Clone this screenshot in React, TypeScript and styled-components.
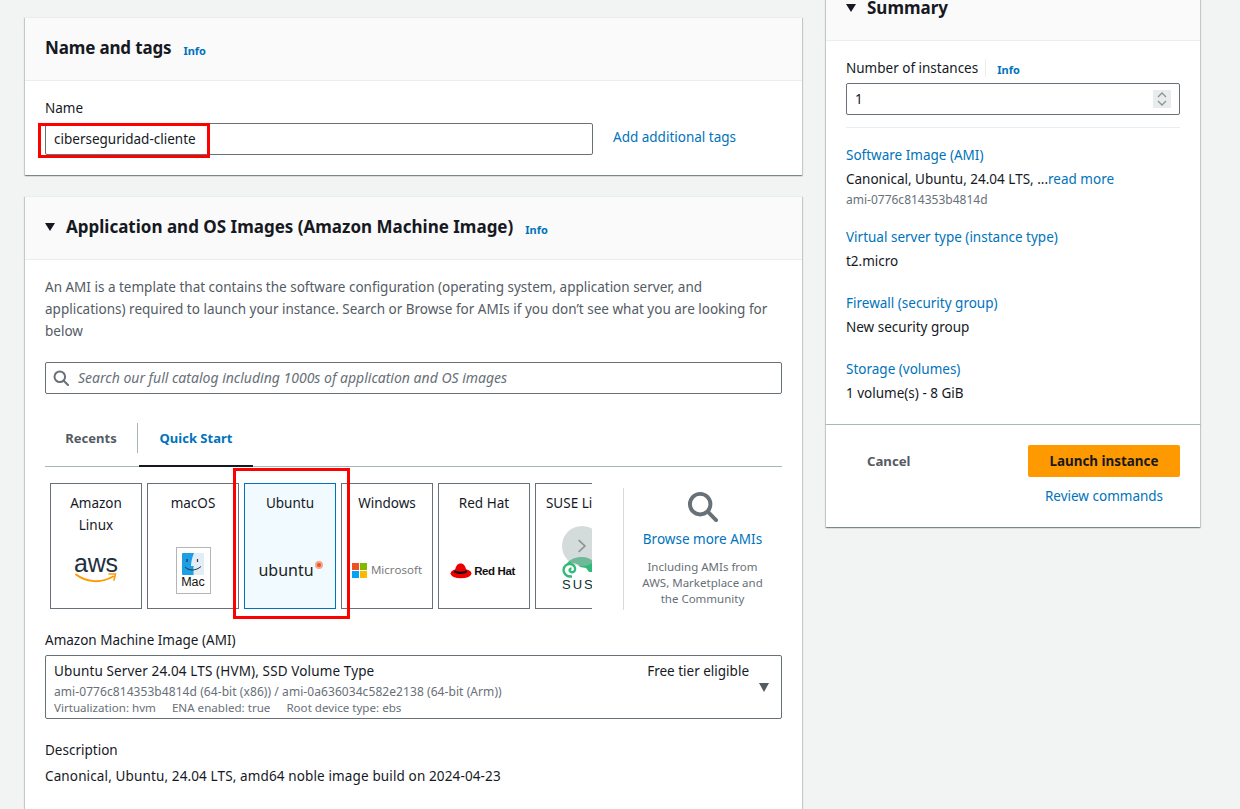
import React from "react";
import styled, { createGlobalStyle } from "styled-components";

const Global = createGlobalStyle`
  html, body { margin: 0; padding: 0; height: 809px; overflow: hidden; background: #f2f3f3; }
  body { font-family: "Noto Sans", "Open Sans", sans-serif; font-size: 14px; line-height: 22px; color: #16191f; }
  * { box-sizing: border-box; }
`;

const Page = styled.div`
  display: grid;
  grid-template-columns: 777px 374px;
  column-gap: 24px;
  padding: 17px 0 0 25px;
  align-items: start;
  position: relative;
`;
const Column = styled.div`display: flex; flex-direction: column; gap: 21px;`;
const Side = styled.div`display: flex; flex-direction: column; margin-top: -40px;`;
const Card = styled.section<{ $h?: number }>`
  background: #fff;
  height: ${p => (p.$h ? p.$h + "px" : "auto")};
  box-shadow: 0 1px 1px 0 rgba(0,28,36,.3), 1px 1px 1px 0 rgba(0,28,36,.15), -1px 1px 1px 0 rgba(0,28,36,.15);
  border-top: 1px solid #eaeded;
`;
const Header = styled.header`
  height: 63px;
  background: #fafafa;
  border-bottom: 1px solid #eaeded;
  display: flex;
  align-items: center;
  padding: 0 20px;
  gap: 12px;
`;
const Title = styled.h2<{ $tight?: boolean }>`
  margin: 0 0 2px;
  font-size: 17px;
  line-height: 22px;
  font-weight: 700;
  white-space: nowrap;
  letter-spacing: ${p => (p.$tight ? "-0.15px" : "0")};
`;
const Caret = styled.span`
  width: 0; height: 0; margin-right: -1px; margin-top: -3px;
  border-left: 5.5px solid transparent; border-right: 5.5px solid transparent; border-top: 8px solid #16191f;
`;
const Info = styled.a`color: #0073bb; font-size: 11px; font-weight: 700; line-height: 16px; margin-top: 3px;`;
const SideInfo = styled(Info)`margin-left: 4px;`;
const NameBody = styled.div`
  padding: 17px 20px 20px;
  display: grid;
  grid-template-columns: 548px auto;
  column-gap: 20px;
  align-items: center;
`;
const Label = styled.div`font-size: 13.5px; line-height: 20px; grid-column: 1 / -1; margin-bottom: 5px;`;
const TextBox = styled.div`
  height: 32px;
  border: 1px solid #687078;
  border-radius: 2px;
  padding: 0 8px;
  display: flex;
  align-items: center;
  font-size: 13.5px;
`;
const Link = styled.a`display: block; color: #0073bb; font-size: 13.5px; line-height: 20px; white-space: nowrap;`;
const TagsLink = styled(Link)`margin-top: -5px;`;
const AmiBody = styled.div`padding: 16px 20px 0;`;
const Para = styled.p`margin: 0 0 20px; font-size: 13.5px; line-height: 22px; color: #545b64;`;
const SearchBox = styled.div`
  height: 32px;
  border: 1px solid #687078;
  border-radius: 2px;
  padding: 0 7px;
  display: flex;
  align-items: center;
  gap: 9px;
  font-size: 14px;
  font-style: italic;
  color: #687078;
`;
const Tabs = styled.div`
  margin-top: 26px;
  height: 47px;
  border-bottom: 1px solid #aab7b8;
  display: flex;
  align-items: flex-start;
`;
const Tab = styled.div<{ $active?: boolean; $w: number }>`
  width: ${p => p.$w}px;
  height: 46px;
  display: flex;
  justify-content: center;
  font-size: 13px;
  line-height: 20px;
  font-weight: 700;
  color: ${p => (p.$active ? "#0073bb" : "#545b64")};
  border-bottom: 2px solid ${p => (p.$active ? "#16191f" : "transparent")};
  padding-top: 7px;
  margin-top: 1px;
  margin-left: ${p => (p.$active ? "1px" : "0")};
`;
const TabDivider = styled.div`width: 1px; height: 30px; margin-top: 3px; background: #aab7b8;`;
const Gallery = styled.div`margin-top: 16px; display: flex; height: 127px; align-items: flex-start;`;
const Strip = styled.div`
  position: relative;
  width: 547px;
  height: 127px;
  padding-left: 5px;
  overflow: hidden;
  display: flex;
  gap: 5px;
  flex: none;
`;
const Tile = styled.div<{ $selected?: boolean }>`
  width: 92px;
  height: 126px;
  flex: none;
  border: 1px solid ${p => (p.$selected ? "#0073bb" : "#687078")};
  background: ${p => (p.$selected ? "#f1faff" : "#fff")};
  padding: 8px 0 0;
  text-align: center;
  font-size: 13.5px;
  line-height: 22px;
  position: relative;
  white-space: nowrap;
`;
const TileName = styled.div`height: 44px; display: block;`;
const LogoSlot = styled.div`
  position: absolute;
  left: 0; right: 0; top: 56px; height: 64px;
  display: flex;
  flex-direction: column;
  align-items: center;
  justify-content: center;
`;
const AwsWord = styled.span`font-family: "Liberation Sans", sans-serif; font-size: 25px; line-height: 20px; letter-spacing: -0.2px; color: #232f3e; margin-top: -7px;`;
const MacBox = styled.div`
  width: 35px; height: 47px; border: 1px solid #b5b5b5; margin-top: -3px; background: #fff;
  display: flex; flex-direction: column; align-items: center; padding-top: 5px;
  font-family: "Liberation Sans", sans-serif; font-size: 12.5px; line-height: 15px; color: #111;
`;
const UbuntuWord = styled.span`
  display: flex; align-items: flex-start;
  font-family: "Noto Sans", sans-serif; font-size: 16px; line-height: 20px; color: #222; margin-top: -5px; margin-left: 1px;
`;
const UbuntuDot = styled.span`width: 8px; height: 8px; border-radius: 50%; background: #e95420; border: 2px solid #f6a68c; margin: 1px 0 0 1px;`;
const MsRow = styled.div`display: flex; align-items: center; gap: 4px; margin-top: -4px; font-family: "Open Sans", sans-serif; font-size: 11.6px; color: #737373;`;
const RhRow = styled.div`display: flex; align-items: center; gap: 2px; margin-top: -2px; margin-left: -3px; font-family: "Liberation Sans", sans-serif; font-size: 11.5px; font-weight: 700; letter-spacing: -0.4px; color: #111;`;
const SuseBox = styled.div`
  position: absolute; left: 26px; top: 72px; width: 60px;
  display: flex; flex-direction: column; align-items: flex-start;
  font-family: "Liberation Sans", sans-serif; font-size: 13px; line-height: 14px; letter-spacing: 2px; color: #0c322c;
`;
const NextButton = styled.div`
  position: absolute; left: 517px; top: 43px; width: 40px; height: 40px; border-radius: 50%;
  background: rgba(170,183,184,.5);
  display: flex; align-items: center; justify-content: center;
`;
const BrowseDivider = styled.div`width: 1px; height: 122px; margin: 5px 0 0 31px; background: #d5dbdb;`;
const Browse = styled.div`
  width: 157px;
  flex: none;
  display: flex;
  flex-direction: column;
  align-items: center;
  text-align: center;
  padding-top: 8px;
`;
const BrowseLink = styled.a`color: #0073bb; font-size: 13.5px; line-height: 20px; margin-top: 7px;`;
const BrowseText = styled.div`font-size: 11.5px; line-height: 16px; color: #687078; margin-top: 10px;`;
const FieldLabel = styled.div`margin-top: 20px; font-size: 13.5px; line-height: 20px;`;
const Select = styled.div`
  margin-top: 5px;
  height: 64px;
  border: 1px solid #687078;
  border-radius: 2px;
  padding: 5px 8px;
  position: relative;
`;
const SelectTop = styled.div`display: flex; justify-content: space-between; padding-right: 24px; font-size: 13.5px; line-height: 20px; margin-bottom: 3px;`;
const SelectName = styled.span`letter-spacing: .13px;`;
const SelectIds = styled.div`font-size: 12px; line-height: 16px; color: #687078; letter-spacing: .07px;`;
const SelectMeta = styled.div`font-size: 11.6px; line-height: 16px; color: #687078; display: flex; gap: 16px;`;
const SelectCaret = styled.span`
  position: absolute; right: 12px; top: 27px;
  width: 0; height: 0;
  border-left: 5.5px solid transparent; border-right: 5.5px solid transparent; border-top: 9px solid #545b64;
`;
const DescLabel = styled.div`margin-top: 21px; font-size: 13.5px; line-height: 20px;`;
const DescText = styled.div`margin-top: 6px; font-size: 13.5px; line-height: 20px; letter-spacing: .13px;`;

const SummaryBody = styled.div`padding: 17px 20px 0; height: 383px;`;
const InstanceLabel = styled.div`display: flex; align-items: center; font-size: 13.5px; line-height: 20px; height: 20px;`;
const SmallDivider = styled.span`width: 1px; height: 18px; background: #eaeded; margin: 0 7px 0 7px;`;
const SpinBox = styled(TextBox)`margin-top: 5px; justify-content: space-between; padding-right: 8px;`;
const Spinner = styled.div`
  width: 18px; height: 18px; background: #e9ebed; display: flex; align-items: center; justify-content: center;
`;
const Rule = styled.hr`margin: 12px 0 0; border: 0; border-top: 1px solid #eaeded;`;
const Block = styled.div<{ $top: number }>`margin-top: ${p => p.$top}px;`;
const BlockText = styled.div`font-size: 13.5px; line-height: 20px; margin-top: 4px;`;
const BlockId = styled.div`font-size: 12px; line-height: 16px; color: #687078; margin-top: 3px;`;
const Inline = styled.a`color: #0073bb;`;
const ActionCard = styled.section`
  background: #fff;
  height: 103px;
  border-top: 1px solid #aab7b8;
  box-shadow: 0 1px 1px 0 rgba(0,28,36,.3), 1px 1px 1px 0 rgba(0,28,36,.15), -1px 1px 1px 0 rgba(0,28,36,.15);
  padding: 20px 20px 0;
  display: grid;
  grid-template-columns: 1fr 152px;
  align-content: start;
`;
const Cancel = styled.div`height: 32px; padding-left: 21px; display: flex; align-items: center; font-weight: 700; font-size: 13.2px; color: #545b64;`;
const Launch = styled.div`
  height: 32px; background: #ff9900; border-radius: 2px;
  display: flex; align-items: center; justify-content: center;
  font-weight: 700; font-size: 13.4px; color: #16191f;
`;
const Review = styled(Link)`grid-column: 2; text-align: center; margin-top: 9px;`;
const Highlight = styled.div<{ $x: number; $y: number; $w: number; $h: number }>`
  position: absolute;
  left: ${p => p.$x}px; top: ${p => p.$y}px; width: ${p => p.$w}px; height: ${p => p.$h}px;
  border: 3px solid #f00;
  pointer-events: none;
`;

const SearchIcon = ({ size, stroke, w }: { size: number; stroke: string; w: number }) => (
  <svg width={size} height={size} viewBox="0 0 16 16" fill="none" stroke={stroke} strokeWidth={w}>
    <circle cx="6.8" cy="6.8" r="5.3" />
    <path d="M10.7 10.7 15 15" strokeLinecap="round" />
  </svg>
);

const Finder = () => (
  <svg width="22" height="22" viewBox="0 0 22 22">
    <rect width="22" height="22" rx="1" fill="#e3edf5" />
    <path d="M1 0h11c-2 5-3 9-3 13h2.500v9H1a1 1 0 0 1-1-1V1a1 1 0 0 1 1-1Z" fill="#1d9fe6" />
    <path d="M5 6v3M15.500 6v3" stroke="#234" strokeWidth="1.200" />
    <path d="M3 14c4 4 11 4 16-.5" stroke="#234" strokeWidth="1" fill="none" />
  </svg>
);

const Smile = () => (
  <svg width="42" height="11" viewBox="0 0 42 11" fill="none">
    <path d="M1 1.500c11 8.500 26 8.500 37 2" stroke="#f90" strokeWidth="2" strokeLinecap="round" />
    <path d="M34 1h6.500l-1.500 6" stroke="#f90" strokeWidth="1.600" strokeLinecap="round" />
  </svg>
);

const MsLogo = () => (
  <svg width="15" height="15" viewBox="0 0 16 16">
    <rect width="7.500" height="7.500" fill="#f25022" />
    <rect x="8.500" width="7.500" height="7.500" fill="#7fba00" />
    <rect y="8.500" width="7.500" height="7.500" fill="#00a4ef" />
    <rect x="8.500" y="8.500" width="7.500" height="7.500" fill="#ffb900" />
  </svg>
);

const RedHatLogo = () => (
  <svg width="22" height="16" viewBox="0 0 22 16">
    <path d="M5 8C5.500 3 7.500 .5 10.500 .5 14 .5 15.500 3 16.500 8Z" fill="#e00" />
    <ellipse cx="11" cy="10.500" rx="10.500" ry="4.800" fill="#e00" />
    <path d="M4.500 7C7 9.200 14 9.200 16.500 7l.7 2.300C14 11.500 7 11.500 3.800 9.300Z" fill="#111" />
  </svg>
);

const Chameleon = () => (
  <svg width="34" height="22" viewBox="0 0 34 22">
    <path d="M3 11C6 3 14 1 20 1c5 0 9 2 11 4l2-4v9l-3 2 1 4h-4l-3-4-6-1C16 7 10 5 3 11Z" fill="#30ba78" />
    <path d="M10 20.500C5 21 1.500 18 1.500 14 1.500 10 5 7.500 8.500 8c3 .5 5 3 4.500 6-.5 2.200-3.500 3-5 1.200-.9-1.200 0-2.700 1.500-2.400" fill="none" stroke="#30ba78" strokeWidth="2.400" />
  </svg>
);

export default function App() {
  return (
    <>
      <Global />
      <Page>
        <Column>
          <Card>
            <Header>
              <Title $tight>Name and tags</Title>
              <Info>Info</Info>
            </Header>
            <NameBody>
              <Label>Name</Label>
              <TextBox>ciberseguridad-cliente</TextBox>
              <TagsLink>Add additional tags</TagsLink>
            </NameBody>
          </Card>
          <Card $h={700}>
            <Header>
              <Caret />
              <Title>Application and OS Images (Amazon Machine Image)</Title>
              <Info>Info</Info>
            </Header>
            <AmiBody>
              <Para>
                An AMI is a template that contains the software configuration (operating system, application server, and
                applications) required to launch your instance. Search or Browse for AMIs if you don’t see what you are
                looking for below
              </Para>
              <SearchBox>
                <SearchIcon size={16} stroke="#687078" w={2} />
                Search our full catalog including 1000s of application and OS images
              </SearchBox>
              <Tabs>
                <Tab $w={92}>Recents</Tab>
                <TabDivider />
                <Tab $active $w={114}>Quick Start</Tab>
              </Tabs>
              <Gallery>
                <Strip>
                  <Tile>
                    <TileName>Amazon<br />Linux</TileName>
                    <LogoSlot><AwsWord>aws</AwsWord><Smile /></LogoSlot>
                  </Tile>
                  <Tile>
                    <TileName>macOS</TileName>
                    <LogoSlot><MacBox><Finder />Mac</MacBox></LogoSlot>
                  </Tile>
                  <Tile $selected>
                    <TileName>Ubuntu</TileName>
                    <LogoSlot><UbuntuWord>ubuntu<UbuntuDot /></UbuntuWord></LogoSlot>
                  </Tile>
                  <Tile>
                    <TileName>Windows</TileName>
                    <LogoSlot><MsRow><MsLogo />Microsoft</MsRow></LogoSlot>
                  </Tile>
                  <Tile>
                    <TileName>Red Hat</TileName>
                    <LogoSlot><RhRow><RedHatLogo />Red Hat</RhRow></LogoSlot>
                  </Tile>
                  <Tile>
                    <TileName>SUSE Linux</TileName>
                    <SuseBox><Chameleon />SUSE</SuseBox>
                  </Tile>
                  <NextButton>
                    <svg width="10" height="16" viewBox="0 0 12 18" fill="none" stroke="#879596" strokeWidth="2">
                      <path d="M2 2l7.500 7L2 16" />
                    </svg>
                  </NextButton>
                </Strip>
                <BrowseDivider />
                <Browse>
                  <SearchIcon size={31} stroke="#687078" w={2} />
                  <BrowseLink>Browse more AMIs</BrowseLink>
                  <BrowseText>Including AMIs from<br />AWS, Marketplace and<br />the Community</BrowseText>
                </Browse>
              </Gallery>
              <FieldLabel>Amazon Machine Image (AMI)</FieldLabel>
              <Select>
                <SelectTop><SelectName>Ubuntu Server 24.04 LTS (HVM), SSD Volume Type</SelectName><span>Free tier eligible</span></SelectTop>
                <SelectIds>ami-0776c814353b4814d (64-bit (x86)) / ami-0a636034c582e2138 (64-bit (Arm))</SelectIds>
                <SelectMeta><span>Virtualization: hvm</span><span>ENA enabled: true</span><span>Root device type: ebs</span></SelectMeta>
                <SelectCaret />
              </Select>
              <DescLabel>Description</DescLabel>
              <DescText>Canonical, Ubuntu, 24.04 LTS, amd64 noble image build on 2024-04-23</DescText>
            </AmiBody>
          </Card>
        </Column>
        <Side>
          <Card>
            <Header>
              <Caret />
              <Title>Summary</Title>
            </Header>
            <SummaryBody>
              <InstanceLabel>Number of instances<SmallDivider /><SideInfo>Info</SideInfo></InstanceLabel>
              <SpinBox>
                1
                <Spinner>
                  <svg width="12" height="16" viewBox="0 0 12 16" fill="none" stroke="#879596" strokeWidth="1.300">
                    <path d="M2 6l4-4 4 4M2 10l4 4 4-4" />
                  </svg>
                </Spinner>
              </SpinBox>
              <Rule />
              <Block $top={17}>
                <Link>Software Image (AMI)</Link>
                <BlockText>Canonical, Ubuntu, 24.04 LTS, ...<Inline>read more</Inline></BlockText>
                <BlockId>ami-0776c814353b4814d</BlockId>
              </Block>
              <Block $top={19}>
                <Link>Virtual server type (instance type)</Link>
                <BlockText>t2.micro</BlockText>
              </Block>
              <Block $top={22}>
                <Link>Firewall (security group)</Link>
                <BlockText>New security group</BlockText>
              </Block>
              <Block $top={22}>
                <Link>Storage (volumes)</Link>
                <BlockText>1 volume(s) - 8 GiB</BlockText>
              </Block>
            </SummaryBody>
          </Card>
          <ActionCard>
            <Cancel>Cancel</Cancel>
            <Launch>Launch instance</Launch>
            <Review>Review commands</Review>
          </ActionCard>
        </Side>
        <Highlight $x={38} $y={123} $w={172} $h={35} />
        <Highlight $x={233} $y={468} $w={117} $h={151} />
      </Page>
    </>
  );
}
